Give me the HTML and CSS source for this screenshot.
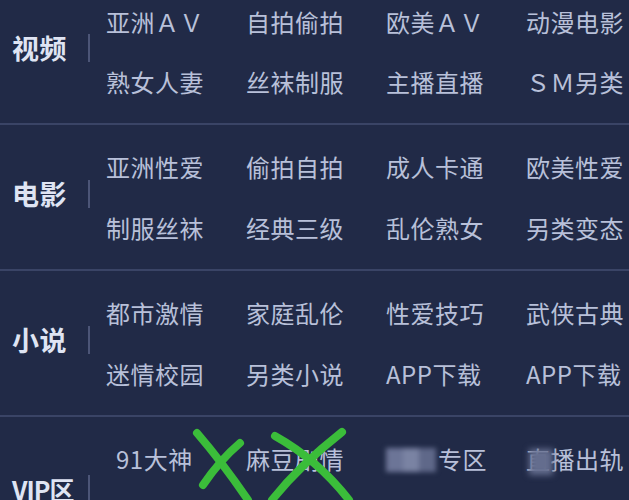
FILE: index.html
```html
<!DOCTYPE html>
<html lang="zh-CN">
<head>
<meta charset="utf-8">
<link rel="stylesheet" href="styles.css">
</head>
<body>
<div class="menu">
  <section class="group first">
    <div class="head"><span class="label">视频</span><span class="bar"></span></div>
    <div class="items">
      <span class="item">亚洲ＡＶ</span><span class="item">自拍偷拍</span><span class="item">欧美ＡＶ</span><span class="item">动漫电影</span>
      <span class="item">熟女人妻</span><span class="item">丝袜制服</span><span class="item">主播直播</span><span class="item">ＳＭ另类</span>
    </div>
  </section>
  <section class="group">
    <div class="head"><span class="label">电影</span><span class="bar"></span></div>
    <div class="items">
      <span class="item">亚洲性爱</span><span class="item">偷拍自拍</span><span class="item">成人卡通</span><span class="item">欧美性爱</span>
      <span class="item">制服丝袜</span><span class="item">经典三级</span><span class="item">乱伦熟女</span><span class="item">另类变态</span>
    </div>
  </section>
  <section class="group">
    <div class="head"><span class="label">小说</span><span class="bar"></span></div>
    <div class="items">
      <span class="item">都市激情</span><span class="item">家庭乱伦</span><span class="item">性爱技巧</span><span class="item">武侠古典</span>
      <span class="item">迷情校园</span><span class="item">另类小说</span><span class="item">APP下载</span><span class="item">APP下载</span>
    </div>
  </section>
  <section class="group vip">
    <div class="head"><span class="label">VIP区</span><span class="bar"></span></div>
    <div class="items">
      <span class="item item-narrow">91大神</span><span class="item">麻豆剧情</span><span class="item"><span class="mosaic"><i></i><i></i><i></i></span>专区</span><span class="item"><span class="hidden-char">直<span class="smudge"></span></span>播出轨</span>
    </div>
  </section>
  <svg class="marks" width="629" height="500" viewBox="0 0 629 500">
    <g fill="none" stroke="#3bbd3a" stroke-width="8" stroke-linecap="round">
      <path d="M197 433 Q222 462 248 500"/>
      <path d="M240 443 Q220 460 203 485"/>
      <path d="M275 436 Q318 460 349 500"/>
      <path d="M342 432 Q300 465 272 500"/>
    </g>
  </svg>
</div>
</body>
</html>
```
FILE: styles.css
```css
html, body {
  margin: 0;
  padding: 0;
  background: #212a47;
  overflow: hidden;
}
.menu {
  position: relative;
  width: 629px;
  height: 500px;
  overflow: hidden;
  font-family: "Noto Sans CJK SC", "Noto Sans", sans-serif;
}
.group {
  display: flex;
  align-items: center;
  padding: 25px 0 24px 0;
  border-bottom: 2px solid #3a4466;
}
.group.first {
  padding-top: 5px;
}
.group.first .items {
  row-gap: 26px;
}
.group.vip {
  border-bottom: none;
}
.head {
  width: 90px;
  flex: none;
  display: flex;
  align-items: center;
  margin-top: -8px;
  box-sizing: border-box;
  padding-left: 12px;
}
.vip .head {
  margin-top: -2px;
}
.label {
  width: 77px;
  font-size: 27px;
  font-weight: 700;
  color: #dfe4f3;
  line-height: 34px;
  letter-spacing: 0.5px;
  white-space: nowrap;
}
.vip .label {
  font-size: 25px;
  letter-spacing: -1px;
}
.bar {
  width: 2px;
  height: 28px;
  background: #4c5577;
  flex: none;
}
.items {
  margin-left: 16px;
  display: grid;
  grid-template-columns: repeat(4, 140px);
  grid-auto-rows: 34px;
  row-gap: 27px;
  flex: none;
}
.vip .items {
  grid-template-rows: 34px 34px;
}
.item {
  font-size: 24px;
  line-height: 34px;
  color: #b8c0d9;
  white-space: nowrap;
  letter-spacing: 0.5px;
}
.item-narrow {
  padding-left: 10px;
}
.mosaic {
  display: inline-flex;
  width: 50px;
  height: 24px;
  vertical-align: -3px;
  margin-right: 2px;
  filter: blur(2.5px);
}
.mosaic i {
  flex: 1;
  background: #6c7597;
}
.mosaic i:nth-child(2) {
  background: #7a83a3;
}
.mosaic i:nth-child(3) {
  background: #5f6889;
}
.hidden-char {
  position: relative;
  display: inline-block;
}
.smudge {
  position: absolute;
  left: 3px;
  top: 7px;
  width: 24px;
  height: 26px;
  background: #646d8e;
  filter: blur(3px);
}
.marks {
  position: absolute;
  left: 0;
  top: 0;
  pointer-events: none;
}
```
